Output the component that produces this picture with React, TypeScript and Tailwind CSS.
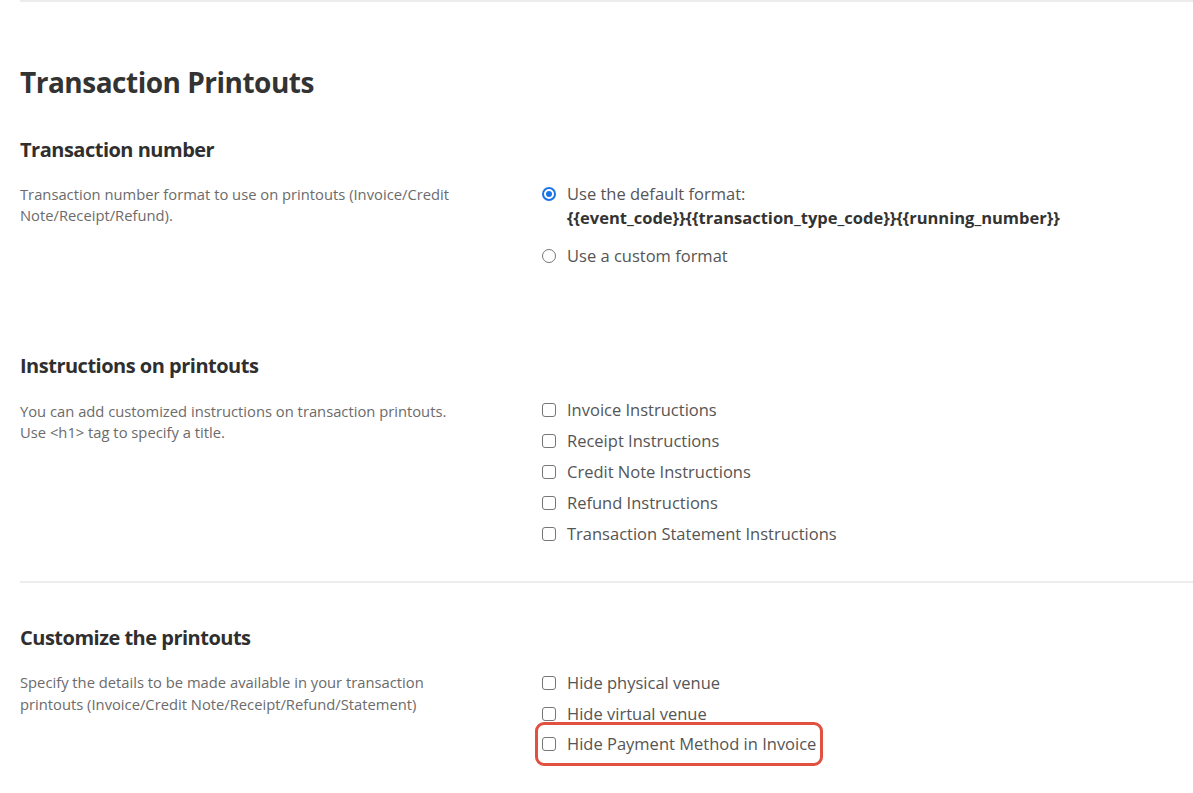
import React from "react";

const font = { fontFamily: '"Open Sans", "Noto Sans", sans-serif' };

function Radio({ checked }: { checked?: boolean }) {
  return checked ? (
    <span className="mt-[5px] flex h-[14px] w-[14px] shrink-0 items-center justify-center rounded-full bg-[#1a73e8]">
      <span className="h-[10px] w-[10px] rounded-full border-2 border-white bg-[#1a73e8]" />
    </span>
  ) : (
    <span className="mt-[5px] h-[14px] w-[14px] shrink-0 rounded-full border border-[#767676] bg-white" />
  );
}

function Check() {
  return <span className="h-[14px] w-[14px] shrink-0 rounded-[3px] border border-[#767676] bg-white" />;
}

function CheckRow({ label, highlight }: { label: string; highlight?: boolean }) {
  return (
    <div className="relative flex h-[24px] items-center gap-[11px]">
      <Check />
      <span className="text-[16.5px] leading-[24px] text-[#555]">{label}</span>
      {highlight && (
        <span className="pointer-events-none absolute -left-[7px] -top-[10px] h-[44px] w-[288px] rounded-[9px] border-[3px] border-[#e0513f]" />
      )}
    </div>
  );
}

function Heading({ children }: { children: React.ReactNode }) {
  return (
    <h2 className="text-[20px] font-bold leading-[28px] tracking-[-0.5px] text-[#2f2f2f]">{children}</h2>
  );
}

export default function App() {
  return (
    <div style={font} className="min-h-[793px] w-[1193px] bg-white pl-[20px]">
      <div className="h-[2px] w-full bg-[#ececec]" />
      <h1 className="mt-[62px] text-[28px] font-bold leading-[36px] tracking-[-0.5px] text-[#333]">
        Transaction Printouts
      </h1>

      {/* Transaction number */}
      <div className="mt-[36px]">
        <Heading>Transaction number</Heading>
        <div className="mt-[18px] grid grid-cols-[522px_1fr]">
          <div className="pt-[2px]">
            <p className="text-[14.75px] leading-[21px] text-[#6b6b6b]">
              Transaction number format to use on printouts (Invoice/Credit
              <br />
              Note/Receipt/Refund).
            </p>
          </div>
          <div className="flex flex-col">
            <div className="flex gap-[11px]">
              <Radio checked />
              <div>
                <div className="text-[16.5px] leading-[24px] text-[#555]">Use the default format:</div>
                <div className="text-[16.5px] font-bold leading-[24px] text-[#333]">
                  {"{{event_code}}{{transaction_type_code}}{{running_number}}"}
                </div>
              </div>
            </div>
            <div className="mt-[14px] flex gap-[11px]">
              <Radio />
              <div className="text-[16.5px] leading-[24px] text-[#555]">Use a custom format</div>
            </div>
          </div>
        </div>
      </div>

      {/* Instructions */}
      <div className="mt-[84px]">
        <Heading>Instructions on printouts</Heading>
        <div className="mt-[18px] grid grid-cols-[522px_1fr]">
          <div className="pt-[3px]">
            <p className="text-[14.75px] leading-[21px] text-[#6b6b6b]">
              You can add customized instructions on transaction printouts.
              <br />
              Use &lt;h1&gt; tag to specify a title.
            </p>
          </div>
          <div className="flex flex-col gap-[7px]">
            <CheckRow label="Invoice Instructions" />
            <CheckRow label="Receipt Instructions" />
            <CheckRow label="Credit Note Instructions" />
            <CheckRow label="Refund Instructions" />
            <CheckRow label="Transaction Statement Instructions" />
          </div>
        </div>
      </div>

      <div className="mt-[35px] h-[2px] w-full bg-[#ececec]" />

      {/* Customize */}
      <div className="mt-[41px]">
        <Heading>Customize the printouts</Heading>
        <div className="mt-[19px] grid grid-cols-[522px_1fr]">
          <div>
            <p className="text-[14.75px] leading-[22px] text-[#6b6b6b]">
              Specify the details to be made available in your transaction
              <br />
              printouts (Invoice/Credit Note/Receipt/Refund/Statement)
            </p>
          </div>
          <div className="flex flex-col gap-[6.5px]">
            <CheckRow label="Hide physical venue" />
            <CheckRow label="Hide virtual venue" />
            <CheckRow label="Hide Payment Method in Invoice" highlight />
          </div>
        </div>
      </div>
    </div>
  );
}
